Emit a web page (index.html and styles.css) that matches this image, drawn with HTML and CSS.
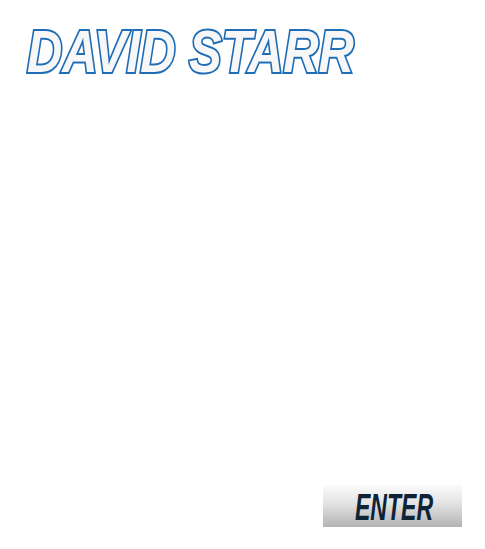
FILE: index.html
```html
<!DOCTYPE html>
<html>
<head>
<meta charset="utf-8">
<link rel="stylesheet" href="styles.css">
</head>
<body>
<div class="page">
  <header class="head">
    <h1 class="title"><span class="title-text">DAVID STARR</span></h1>
  </header>
  <main class="spacer"></main>
  <footer class="foot">
    <a class="enter" href="#"><span class="enter-text">ENTER</span></a>
  </footer>
</div>
</body>
</html>
```
FILE: styles.css
```css
html, body {
  margin: 0;
  padding: 0;
  background: #ffffff;
}
.page {
  width: 485px;
  height: 549px;
  display: flex;
  flex-direction: column;
  box-sizing: border-box;
}
.head {
  padding: 22px 0 0 27px;
}
.title {
  margin: 0;
  font-family: "Liberation Sans", Arial, sans-serif;
  font-weight: bold;
  font-style: italic;
  font-size: 60px;
  line-height: 60px;
  height: 60px;
}
.title-text {
  display: inline-block;
  transform: scaleX(0.815);
  transform-origin: left center;
  color: #f8f7f7;
  -webkit-text-stroke: 4px #1f6db6;
  paint-order: stroke fill;
  white-space: nowrap;
}
.spacer {
  flex: 1;
}
.foot {
  display: flex;
  justify-content: flex-end;
  padding: 0 23px 22px 0;
}
.enter {
  width: 139px;
  height: 42px;
  display: flex;
  align-items: center;
  justify-content: center;
  background: linear-gradient(to bottom, #fbfbfb 0%, #e2e2e2 45%, #b3b3b3 100%);
  text-decoration: none;
}
.enter-text {
  display: inline-block;
  font-family: "Liberation Sans", Arial, sans-serif;
  font-weight: bold;
  font-style: italic;
  font-size: 36px;
  line-height: 36px;
  color: #0f2337;
  transform: scaleX(0.64);
  margin: 3px 0 0 4px;
}
```
